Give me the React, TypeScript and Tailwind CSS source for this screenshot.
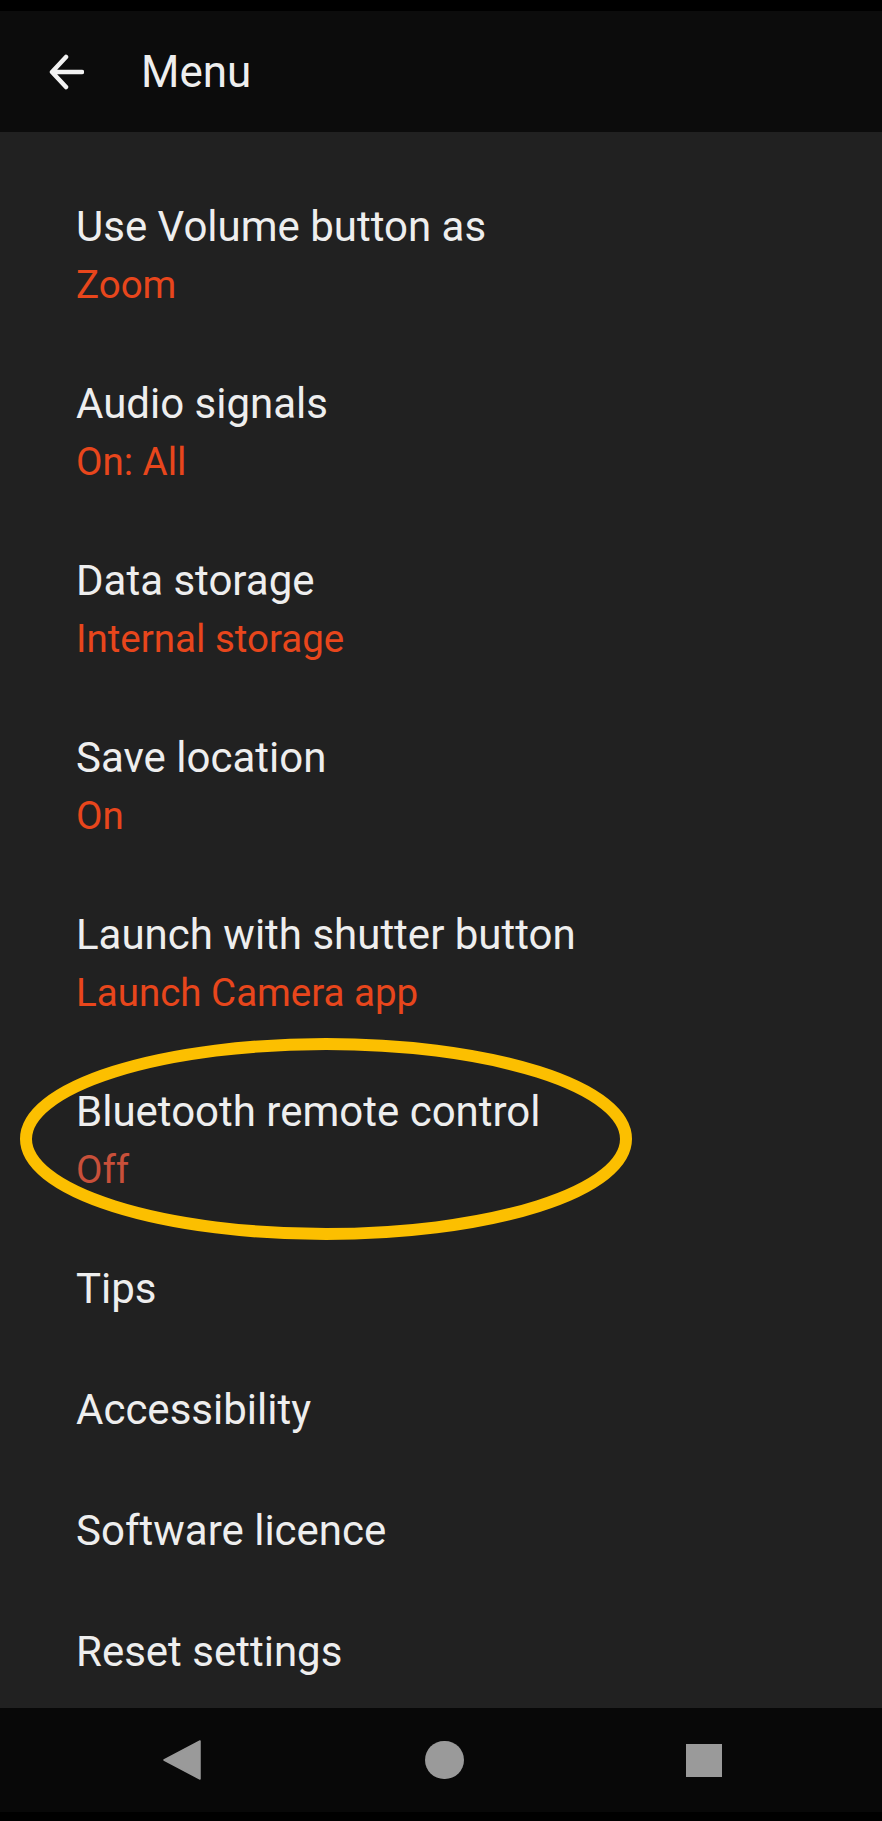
import React from "react";

type Item = {
  title: string;
  value?: string;
  muted?: boolean;
};

const items: Item[] = [
  { title: "Use Volume button as", value: "Zoom" },
  { title: "Audio signals", value: "On: All" },
  { title: "Data storage", value: "Internal storage" },
  { title: "Save location", value: "On" },
  { title: "Launch with shutter button", value: "Launch Camera app" },
  { title: "Bluetooth remote control", value: "Off", muted: true },
  { title: "Tips" },
  { title: "Accessibility" },
  { title: "Software licence" },
  { title: "Reset settings" },
];

function MenuRow({ item }: { item: Item }) {
  return (
    <div className={item.value ? "pl-[76px] pr-6 pt-[31px] pb-[30px]" : "pl-[76px] pr-6 pt-[31px] pb-[32px]"}>
      <div className="text-[42px] leading-[58px] text-[#eeeeee]">{item.title}</div>
      {item.value && (
        <div
          className={
            item.muted
              ? "text-[38.5px] leading-[58px] text-[#c8503a]"
              : "text-[38.5px] leading-[58px] text-[#e8461c]"
          }
        >
          {item.value}
        </div>
      )}
    </div>
  );
}

export default function App() {
  return (
    <div
      className="flex h-[1821px] w-[882px] flex-col overflow-hidden bg-black"
      style={{ fontFamily: "Roboto, 'Liberation Sans', sans-serif" }}
    >
      <div className="h-[11px] shrink-0 bg-black" />

      {/* toolbar */}
      <div className="flex h-[121px] shrink-0 items-center bg-[#0c0c0c]">
        <div className="flex w-[141px] justify-start pl-[49px]">
          <svg width="35" height="36" viewBox="0 0 35 36" fill="none">
            <path
              d="M33 18H4M17 3L3 18L17 33"
              stroke="#f2f2f2"
              strokeWidth="4.5"
              strokeLinecap="round"
              strokeLinejoin="round"
            />
          </svg>
        </div>
        <span className="text-[44px] text-[#eeeeee]">Menu</span>
      </div>

      {/* list */}
      <div className="relative min-h-0 flex-1 overflow-hidden bg-[#212121] pt-[35px]">
        {items.map((item) => (
          <MenuRow key={item.title} item={item} />
        ))}

        {/* highlight annotation */}
        <svg
          className="pointer-events-none absolute left-0 top-[905px]"
          width="660"
          height="210"
          viewBox="0 0 660 210"
        >
          <ellipse cx="326" cy="102" rx="300" ry="95" fill="none" stroke="#fcbf00" strokeWidth="12" />
        </svg>
      </div>

      {/* nav bar */}
      <div className="flex h-[104px] shrink-0 items-center bg-[#080808]">
        <div className="flex w-full items-center">
          <div className="ml-[163px] flex">
            <svg width="38" height="40" viewBox="0 0 38 40">
              <path d="M37 1L1 20L37 39Z" fill="#9a9a9a" strokeLinejoin="round" stroke="#9a9a9a" strokeWidth="1.5" />
            </svg>
          </div>
          <div className="ml-[224px] h-[38px] w-[39px] rounded-full bg-[#9a9a9a]" />
          <div className="ml-[222px] h-[33px] w-[36px] bg-[#9a9a9a]" />
        </div>
      </div>
      <div className="h-[9px] shrink-0 bg-black" />
    </div>
  );
}
